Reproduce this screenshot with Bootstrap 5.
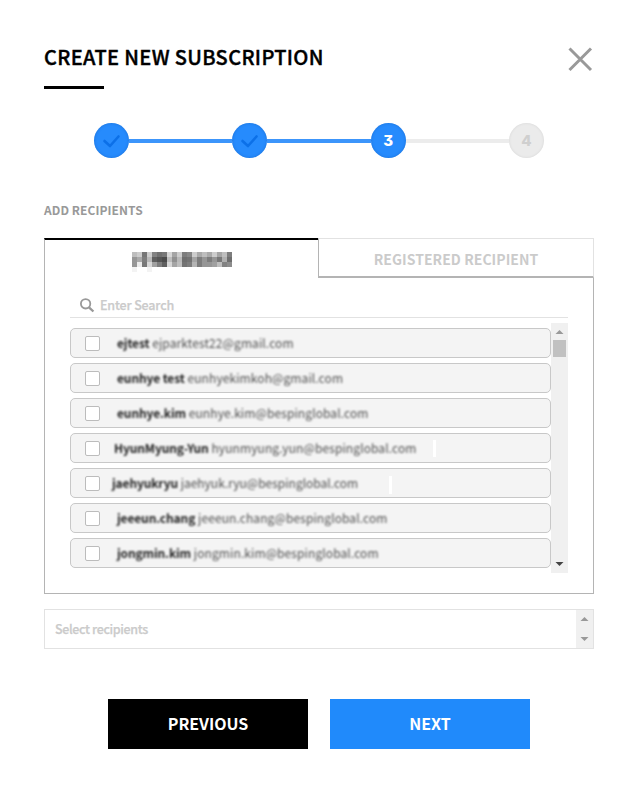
<!DOCTYPE html>
<html lang="en">
<head>
<meta charset="utf-8">
<meta name="viewport" content="width=device-width, initial-scale=1">
<title>Create new subscription</title>
<link href="https://cdn.jsdelivr.net/npm/bootstrap@5.3.0/dist/css/bootstrap.min.css" rel="stylesheet">
<style>
body{font-family:"Noto Sans CJK KR","Noto Sans",sans-serif;background:#fff;color:#000}
.dialog-page{width:641px;height:797px;padding:0 47px 0 44px;overflow:hidden}
.dialog-head{height:89px;padding-top:41px}
.dialog-title{font-size:20px;line-height:31px;font-weight:500;letter-spacing:.35px;-webkit-text-stroke:.4px #000;white-space:nowrap}
.title-rule{width:60px;height:3px;margin-top:14px;background:#000}
.close-btn{margin:4px 0 0;width:28px;height:28px}
.stepper{margin:34px 50px 0;height:35px}
.step-dot{width:35px;height:35px;background:#268bfd;box-shadow:inset 0 0 3px rgba(0,60,140,.35);font:800 15px/35px Inter,sans-serif;font-feature-settings:"cv09";color:#fff}
.step-dot.pending{background:#ebebeb;color:#cfcfcf;box-shadow:inset 0 0 3px rgba(0,0,0,.09)}
.step-line{height:4px;background:#3c95fb}
.step-line.pending{background:#ececec}
.section-label{margin-top:42px;font-size:12px;line-height:20px;font-weight:700;color:#999;letter-spacing:.07px}
.panel-tabs{margin-top:18px;height:40px}
.tab-on{width:274px;border-left:1px solid #b4b4b4;border-top:2px solid #000}
.tab-off{border:1px solid #e2e2e2;border-left-color:#b4b4b4;border-bottom:2px solid #b4b4b4;color:#cbcbcb;font-size:14px;font-weight:700;line-height:40px;letter-spacing:.05px}
.panel-body{height:316px;border:1px solid #b4b4b4;border-top:0;padding:17px 25px 0}
.search-line{height:23px;border-bottom:1px solid #e2e2e2;padding:0 0 0 10px;color:#cbcbcb;font-size:12.5px;line-height:20px;font-weight:500;letter-spacing:-.15px;-webkit-text-stroke:.25px #cbcbcb}
.recip-list{height:250px;margin-top:5px}
.recip-rows{padding-top:5px;gap:5px}
.recip{height:30px;border:1px solid #c8c8c8;border-radius:5px;background:#f4f4f4;padding-left:14px}
.tick-box{width:15px;height:15px;border:1px solid #bcbcbc;border-radius:2px;background:#fff}
.recip-text{font-size:12px;line-height:28px;white-space:pre;filter:blur(1.1px);color:#505050;margin-left:17px;letter-spacing:.1px}
.recip-text b{color:#222;font-weight:700;letter-spacing:-.12px}
.recip-text.near{margin-left:14px}
.recip-text.tight{margin-left:12px;letter-spacing:0}
.scroll-rail{width:17px;background:#f0f0f0}
.scroll-thumb{width:13px;height:17px;background:#c1c1c1}
.chosen{height:40px;margin-top:15px;border:1px solid #e2e2e2;color:#cbcbcb;font-size:12.5px;font-weight:500;letter-spacing:-.35px;line-height:38px;padding-left:10px;-webkit-text-stroke:.25px #cbcbcb}
.actions{margin-top:50px;gap:22px;padding-left:64px}
.actions .btn{width:200px;height:50px;font-size:16px;font-weight:700;letter-spacing:-.05px;padding:0 0 2px}
.btn-next{background:#208afb;color:#fff}
.fleck{width:3px;height:17px;background:#fff}
.fleck.far{height:18px;margin:4px 0 0 31px}
</style>
</head>
<body>
<main class="dialog-page">
  <header class="dialog-head d-flex justify-content-between">
    <div><h1 class="dialog-title m-0">CREATE NEW SUBSCRIPTION</h1><div class="title-rule"></div></div>
    <button class="close-btn border-0 bg-transparent p-0 d-block" aria-label="Close"><svg class="d-block" width="28" height="28"><path d="M3.5 3.5 25 25M25 3.5 3.5 25" stroke="#999" stroke-width="3"/></svg></button>
  </header>
  <div class="stepper d-flex align-items-center">
    <div class="step-dot rounded-circle flex-shrink-0"><svg class="d-block" width="35" height="35"><path d="M10.5 18 16 23 24.5 13.5" fill="none" stroke="#0c70e8" stroke-width="2.6" stroke-linecap="round" stroke-linejoin="round"/></svg></div>
    <div class="step-line flex-grow-1"></div>
    <div class="step-dot rounded-circle flex-shrink-0"><svg class="d-block" width="35" height="35"><path d="M10.5 18 16 23 24.5 13.5" fill="none" stroke="#0c70e8" stroke-width="2.6" stroke-linecap="round" stroke-linejoin="round"/></svg></div>
    <div class="step-line flex-grow-1"></div>
    <div class="step-dot rounded-circle flex-shrink-0 text-center">3</div>
    <div class="step-line pending flex-grow-1"></div>
    <div class="step-dot pending rounded-circle flex-shrink-0 text-center">4</div>
  </div>
  <div class="section-label">ADD RECIPIENTS</div>
  <div class="panel-tabs d-flex">
    <div class="tab-on d-flex">
      <svg width="273" height="38" shape-rendering="crispEdges" role="img" aria-label="Redacted tab name">
        <g transform="translate(87 12)" id="mosaic"></g>
      </svg>
    </div>
    <div class="tab-off flex-grow-1 text-center">REGISTERED RECIPIENT</div>
  </div>
  <section class="panel-body">
    <div class="search-line d-flex">
      <svg class="flex-shrink-0 me-1" width="16" height="20"><circle cx="5.6" cy="8.8" r="4.7" fill="none" stroke="#999" stroke-width="1.8"/><path d="m9 12.3 4.4 4.2" stroke="#999" stroke-width="2.3"/></svg>
      <span>Enter Search</span>
    </div>
    <div class="recip-list d-flex">
      <div class="recip-rows d-flex flex-column flex-grow-1">
        <div class="recip d-flex align-items-center"><span class="tick-box"></span><span class="recip-text"><b>ejtest</b> ejparktest22@gmail.com</span></div>
        <div class="recip d-flex align-items-center"><span class="tick-box"></span><span class="recip-text"><b>eunhye test</b> eunhyekimkoh@gmail.com</span></div>
        <div class="recip d-flex align-items-center"><span class="tick-box"></span><span class="recip-text"><b>eunhye.kim</b> eunhye.kim@bespinglobal.com</span></div>
        <div class="recip d-flex align-items-center"><span class="tick-box"></span><span class="recip-text near"><b>HyunMyung-Yun</b> hyunmyung.yun@bespinglobal.com</span><span class="fleck ms-3"></span></div>
        <div class="recip d-flex align-items-center"><span class="tick-box"></span><span class="recip-text tight"><b>jaehyukryu</b> jaehyuk.ryu@bespinglobal.com</span><span class="fleck far"></span></div>
        <div class="recip d-flex align-items-center"><span class="tick-box"></span><span class="recip-text"><b>jeeeun.chang</b> jeeeun.chang@bespinglobal.com</span></div>
        <div class="recip d-flex align-items-center"><span class="tick-box"></span><span class="recip-text"><b>jongmin.kim</b> jongmin.kim@bespinglobal.com</span></div>
      </div>
      <div class="scroll-rail d-flex flex-column align-items-center">
        <svg class="d-block" width="17" height="17"><path d="M4.5 11h8L8.5 7z" fill="#999"/></svg>
        <div class="scroll-thumb"></div>
        <svg class="d-block mt-auto" width="17" height="17"><path d="M4.5 6h8l-4 4z" fill="#444"/></svg>
      </div>
    </div>
  </section>
  <div class="chosen d-flex justify-content-between">
    <span>Select recipients</span>
    <div class="scroll-rail"><svg class="d-block" width="17" height="38"><path d="M4.5 11h8l-4-4zM4.5 27h8l-4 4z" fill="#999"/></svg></div>
  </div>
  <div class="actions d-flex">
    <button class="btn rounded-0 border-0 text-bg-dark bg-black">PREVIOUS</button>
    <button class="btn btn-next rounded-0 border-0">NEXT</button>
  </div>
</main>
<script>
// Greyscale cells of the redacted tab name, one array per row, 5px cells.
const cells=[
 [190,205,118,205,130,112,120,215,165,205,125,135,205,170,190,170,205,165,190,125],
 [150,170,125,185,95,85,75,190,145,185,110,115,165,125,150,125,150,120,175,110],
 [150,235,120,215,160,125,95,215,165,190,115,125,180,125,150,150,160,190,130,140],
 [243,255,255,243,255,255,255,255,255,255,255,255,255,255,255,255,255,255,255,255]];
const g=document.getElementById('mosaic');
cells.forEach((row,y)=>row.forEach((v,x)=>{
  const r=document.createElementNS('http://www.w3.org/2000/svg','rect');
  for(const [k,val] of Object.entries({x:x*5,y:y*5,width:5,height:5,fill:`rgb(${v},${v},${v})`}))r.setAttribute(k,val);
  g.appendChild(r);
}));
</script>
<script src="https://cdn.jsdelivr.net/npm/bootstrap@5.3.0/dist/js/bootstrap.bundle.min.js"></script>
</body>
</html>
